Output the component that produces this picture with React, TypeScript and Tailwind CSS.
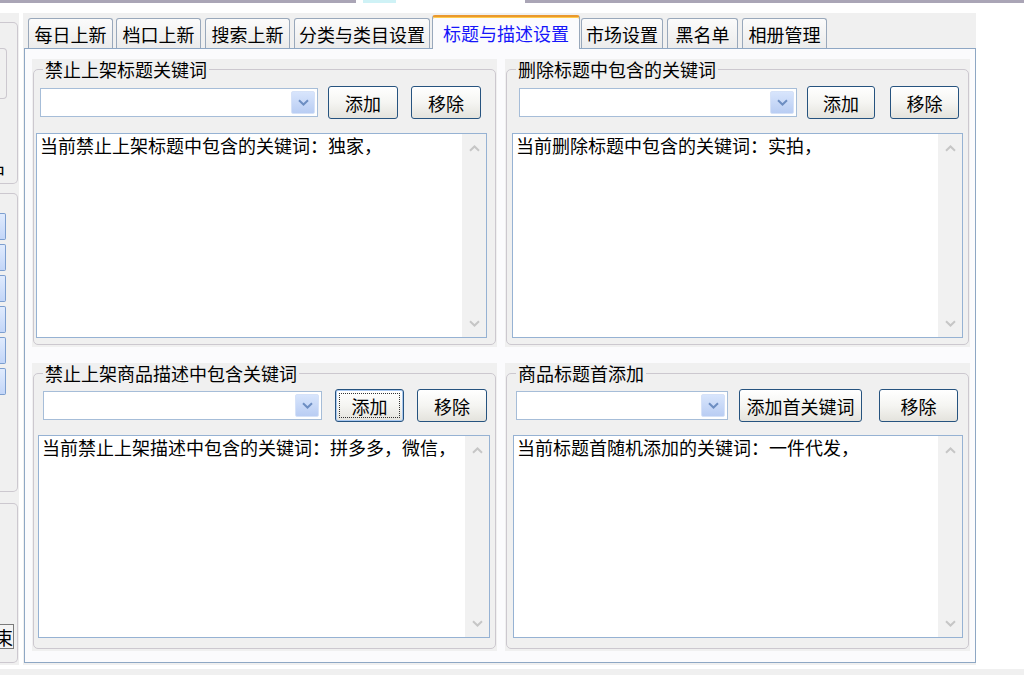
import type { ReactNode } from "react";

const tabs = [
  { label: "每日上新", cls: "w-[85px]" },
  { label: "档口上新", cls: "ml-[3px] w-[85px]" },
  { label: "搜索上新", cls: "ml-[4px] w-[85px]" },
  { label: "分类与类目设置", cls: "ml-[4px] w-[136px]" },
  { label: "标题与描述设置", cls: "ml-[2px] w-[148px]", active: true },
  { label: "市场设置", cls: "ml-[1px] w-[82px]" },
  { label: "黑名单", cls: "ml-[4px] w-[71px]" },
  { label: "相册管理", cls: "ml-[4px] w-[85px]" },
];

type GroupCfg = {
  title: string;
  text: string;
  row: string;
  combo: string;
  btn1: string;
  btn1Label: string;
  btn2: string;
  area: string;
  focused?: boolean;
};

const groups: GroupCfg[] = [
  {
    title: "禁止上架标题关键词",
    text: "当前禁止上架标题中包含的关键词：独家，",
    row: "mt-[7px]",
    combo: "ml-[6px] w-[278px]",
    btn1: "ml-[10px] w-[70px]",
    btn1Label: "添加",
    btn2: "ml-[13px] w-[70px]",
    area: "ml-[2px] mt-[14px] w-[451px] h-[205px]",
  },
  {
    title: "删除标题中包含的关键词",
    text: "当前删除标题中包含的关键词：实拍，",
    row: "mt-[7px]",
    combo: "ml-[12px] w-[278px]",
    btn1: "ml-[10px] w-[68px]",
    btn1Label: "添加",
    btn2: "ml-[15px] w-[69px]",
    area: "ml-[5px] mt-[14px] w-[451px] h-[205px]",
  },
  {
    title: "禁止上架商品描述中包含关键词",
    text: "当前禁止上架描述中包含的关键词：拼多多，微信，",
    row: "mt-[6px]",
    combo: "ml-[9px] w-[279px]",
    btn1: "ml-[13px] w-[69px]",
    btn1Label: "添加",
    btn2: "ml-[13px] w-[70px]",
    area: "ml-[4px] mt-[13px] w-[452px] h-[203px]",
    focused: true,
  },
  {
    title: "商品标题首添加",
    text: "当前标题首随机添加的关键词：一件代发，",
    row: "mt-[6px]",
    combo: "ml-[9px] w-[212px]",
    btn1: "ml-[11px] w-[123px]",
    btn1Label: "添加首关键词",
    btn2: "ml-[17px] w-[79px]",
    area: "ml-[6px] mt-[13px] w-[450px] h-[203px]",
  },
];

const Chevron = ({ dir, color }: { dir: "up" | "down"; color: string }) => (
  <svg width="11" height="7" viewBox="0 0 11 7">
    <path
      d={dir === "down" ? "M1 1.2 L5.5 5.5 L10 1.2" : "M1 5.8 L5.5 1.5 L10 5.8"}
      fill="none"
      stroke={color}
      strokeWidth="2"
    />
  </svg>
);

const XpButton = ({
  className,
  focused,
  children,
}: {
  className: string;
  focused?: boolean;
  children: ReactNode;
}) => (
  <button
    className={`${className} relative flex h-[33px] shrink-0 items-center justify-center rounded-[3px] border border-[#26537f] bg-linear-to-b from-[#ffffff] via-[#f5f5f2] to-[#e4e3dd] text-[18px] leading-none text-black ${
      focused ? "shadow-[inset_0_0_0_1px_#a9c8f0]" : ""
    }`}
  >
    {focused && (
      <span className="pointer-events-none absolute inset-[3px] border border-dotted border-[#333]" />
    )}
    {children}
  </button>
);

const Combo = ({ className }: { className: string }) => (
  <div
    className={`${className} flex h-[29px] shrink-0 items-center justify-end border border-[#a6bdd8] bg-white p-[2px]`}
  >
    <div className="flex h-full w-[24px] items-center justify-center rounded-[2px] border border-[#d6e2f8] bg-linear-to-b from-[#d8e5fc] to-[#b9cdf3]">
      <Chevron dir="down" color="#6d8ec2" />
    </div>
  </div>
);

const TextBox = ({ className, text }: { className: string; text: string }) => (
  <div className={`${className} flex border border-[#96b2d3] bg-white`}>
    <div className="flex-1 pl-[3px] text-[18px] leading-[22px] text-black">{text}</div>
    <div className="flex w-[24px] flex-col justify-between bg-[#f1f1f1]">
      <div className="flex h-[28px] items-center justify-center">
        <Chevron dir="up" color="#c6c6c6" />
      </div>
      <div className="flex h-[28px] items-center justify-center">
        <Chevron dir="down" color="#c6c6c6" />
      </div>
    </div>
  </div>
);

const Group = ({ g }: { g: GroupCfg }) => (
  <div className="h-[288px] bg-[#f0f0f0] px-px pb-[2px]">
    <fieldset className="h-full rounded-[5px] border border-[#ccc8cf]">
      <legend className="ml-[9px] px-[2px] text-[18px] leading-[20px] text-black">{g.title}</legend>
      <div className={`${g.row} flex items-center`}>
        <Combo className={g.combo} />
        <XpButton className={g.btn1} focused={g.focused}>
          {g.btn1Label}
        </XpButton>
        <XpButton className={g.btn2}>移除</XpButton>
      </div>
      <TextBox className={g.area} text={g.text} />
    </fieldset>
  </div>
);

const LeftColumn = () => (
  <div className="flex h-[652px] w-[19px] shrink-0 flex-col overflow-hidden bg-[#f0f0f0]">
    <div className="mt-[9px] flex h-[162px] w-[18px] flex-col rounded-r-[5px] border-y border-r border-[#ccc8cf]">
      <div className="mt-[25px] h-[51px] w-[7px] rounded-r-[4px] border-y border-r border-[#ccc8cf]" />
      <div className="mt-[62px] flex h-[20px] w-[5px] justify-end overflow-hidden text-[18px] leading-[20px] text-black">
        <span className="shrink-0">中</span>
      </div>
    </div>
    <div className="mt-[9px] flex h-[299px] w-[18px] flex-col gap-[4px] rounded-r-[5px] border-y border-r border-[#ccc8cf] pt-[19px]">
      {[0, 1, 2, 3, 4, 5].map((i) => (
        <div
          key={i}
          className="h-[27px] w-[6px] rounded-r-[2px] border-y border-r border-[#7d9fd0] bg-linear-to-b from-[#e0ebfd] to-[#c3d6f8]"
        />
      ))}
    </div>
    <div className="mt-[11px] flex h-[160px] w-[18px] flex-col rounded-r-[5px] border-y border-r border-[#ccc8cf] pt-[120px]">
      <div className="flex h-[25px] w-[14px] items-center justify-end overflow-hidden border-y border-r border-[#7a7a7a] bg-[#f4f4f4] text-[18px] leading-none text-black">
        <span className="shrink-0">束</span>
      </div>
    </div>
  </div>
);

export default function App() {
  return (
    <div className="flex h-[675px] w-[1024px] flex-col overflow-hidden bg-white font-['Noto_Sans_CJK_SC','Noto_Sans',sans-serif]">
      <div className="flex h-[3px] shrink-0">
        <div className="w-[356px] bg-[#aaa5b6]" />
        <div className="flex w-[169px] bg-white">
          <div className="ml-[7px] w-[33px] bg-[#cff2f6]" />
        </div>
        <div className="flex-1 bg-[#aaa5b6]" />
      </div>

      <div className="mt-[10px] flex h-[652px] shrink-0">
        <LeftColumn />
        <div className="ml-[4px] h-[652px] w-[953px] bg-[#f0f0f0] pt-[2px]">
          <div className="flex h-[33px] items-end pl-[5px]">
            {tabs.map((t) =>
              t.active ? (
                <div
                  key={t.label}
                  className={`${t.cls} relative z-10 -mb-px flex h-[34px] items-center justify-center rounded-t-[3px] border-x border-t-2 border-x-[#99a8bb] border-t-[#e9982f] bg-[#fbfbfd] pb-[1px] text-[18px] leading-none text-[#1616fa] shadow-[inset_0_1px_0_#ffcb4c]`}
                >
                  {t.label}
                </div>
              ) : (
                <div
                  key={t.label}
                  className={`${t.cls} flex h-[30px] items-center justify-center rounded-t-[3px] border-x border-t border-[#99a8bb] bg-linear-to-b from-[#fbfbfb] to-[#ececec] text-[18px] leading-none text-black`}
                >
                  {t.label}
                </div>
              )
            )}
          </div>
          <div className="ml-px h-[615px] w-[952px] border border-[#8ea7c4] bg-[#fbfbfd] pl-[7px] pt-[10px]">
            <div className="grid grid-cols-[465px_465px] grid-rows-[288px_288px] gap-x-[8px] gap-y-[16px]">
              {groups.map((g) => (
                <Group key={g.title} g={g} />
              ))}
            </div>
          </div>
        </div>
      </div>

      <div className="mt-[4px] h-[6px] shrink-0 bg-[#f0f0f0]" />
    </div>
  );
}
